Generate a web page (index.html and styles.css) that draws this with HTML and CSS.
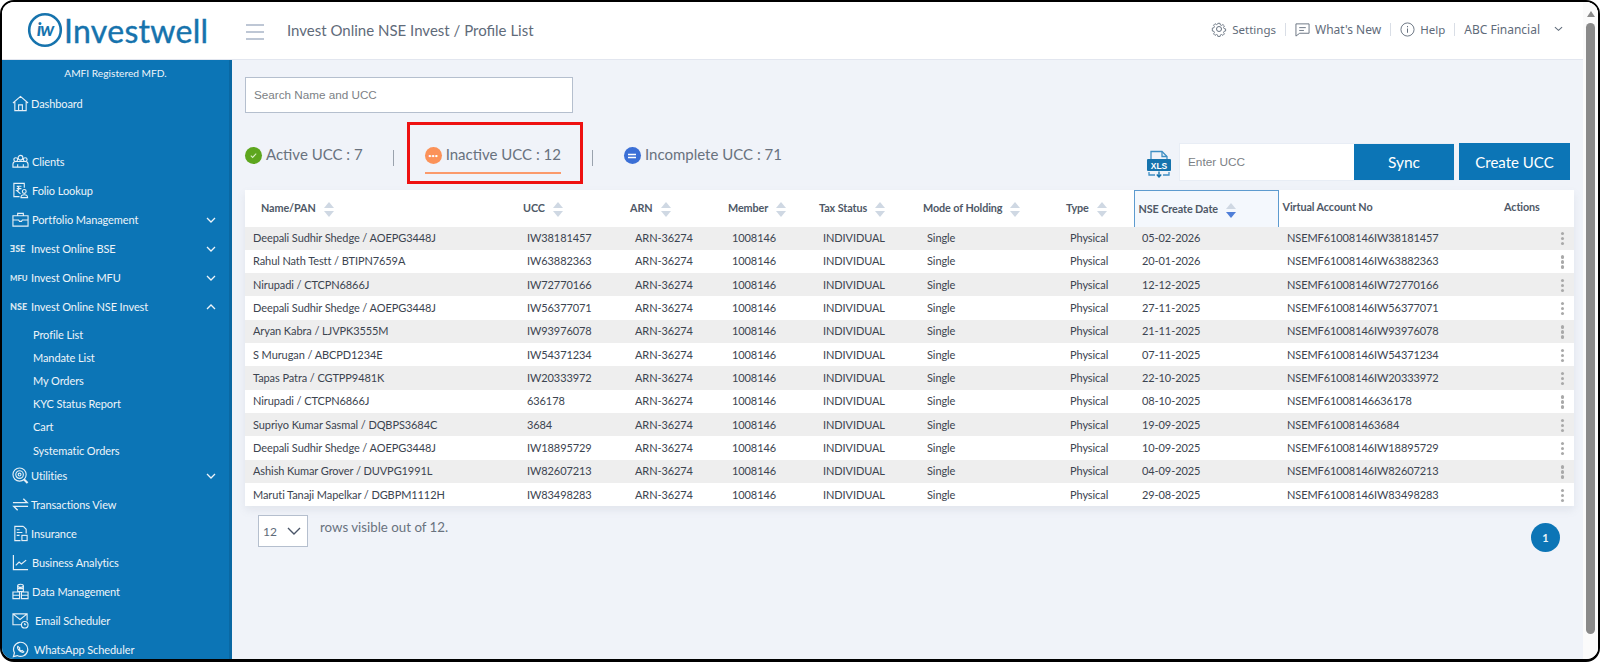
FILE: index.html
```html
<!DOCTYPE html>
<html lang="en">
<head>
<meta charset="utf-8">
<title>Investwell - Profile List</title>
<link rel="stylesheet" href="styles.css">
</head>
<body>
<div class="frame">
  <div class="app">
    <header class="topbar">
      <div class="brand">
        <svg class="brand-mark" viewBox="0 0 36 36" width="36" height="36"><circle cx="18" cy="18" r="15.8" fill="none" stroke="#1673ad" stroke-width="2.6"/><text x="18" y="23.5" text-anchor="middle" class="brand-iw">iw</text></svg>
        <span class="brand-name">Investwell</span>
      </div>
      <svg class="burger" viewBox="0 0 18 16" width="18" height="16"><path d="M0 1h18M0 8h18M0 15h18" stroke="#a9b5c8" stroke-width="1.3" fill="none"/></svg>
      <div class="crumb">Invest Online NSE Invest / Profile List</div>
      <nav class="topnav">
        <svg class="tn-icon" viewBox="0 0 16 16" width="16" height="16"><path d="M6.7 1h2.6l.4 2 1.4.6 1.8-1.1 1.8 1.8-1.1 1.8.6 1.4 2 .4v2.6l-2 .4-.6 1.4 1.1 1.8-1.8 1.8-1.8-1.1-1.4.6-.4 2H6.7l-.4-2-1.4-.6-1.8 1.1-1.8-1.8 1.1-1.8-.6-1.4-2-.4V6.900l2-.4.6-1.400-1.100-1.800 1.800-1.800 1.800 1.100 1.400-.600z" transform="translate(1.500 1.500) scale(.81)" fill="none" stroke="#66717f" stroke-width="1.100"/><circle cx="8" cy="8" r="2.500" fill="none" stroke="#66717f" stroke-width="1"/></svg>
        <span class="tn-link tn-small">Settings</span><i class="tn-sep"></i>
        <svg class="tn-icon" viewBox="0 0 16 16" width="15" height="15"><path d="M1 2h14v10H5l-4 3zM4.500 6h7M4.500 9h5" fill="none" stroke="#66717f" stroke-width="1"/></svg>
        <span class="tn-link">What's New</span><i class="tn-sep"></i>
        <svg class="tn-icon" viewBox="0 0 16 16" width="15" height="15"><circle cx="8" cy="8" r="7" fill="none" stroke="#66717f" stroke-width="1"/><path d="M8 7v4.500M8 4.200v1.300" stroke="#66717f" stroke-width="1.100"/></svg>
        <span class="tn-link tn-small">Help</span><i class="tn-sep"></i>
        <span class="tn-firm">ABC Financial</span>
        <svg class="tn-caret" viewBox="0 0 10 6" width="9" height="6"><path d="M1 1l4 3.500L9 1" fill="none" stroke="#5f6b7a" stroke-width="1.200"/></svg>
      </nav>
    </header>
    <div class="body">
      <aside class="sidebar">
        <div class="amfi">AMFI Registered MFD.</div>
        <ul class="nav">
          <li class="nav-item nav-gap"><svg class="nav-icon" viewBox="0 0 18 18"><path d="M1 8.500 9 1.500l8 7M3 7.500V16.500h12V7.500M7 16.500V10.500h4v6" /></svg><span>Dashboard</span></li>
          <li class="nav-item shift-1"><svg class="nav-icon" viewBox="0 0 18 18"><circle cx="9" cy="5" r="2.500"/><circle cx="4" cy="7" r="2"/><circle cx="14" cy="7" r="2"/><path d="M1 15v-3c0-2 1.500-3 3-3h10c1.500 0 3 1 3 3v3zM6 15v-3M12 15v-3"/></svg><span>Clients</span></li>
          <li class="nav-item shift-1"><svg class="nav-icon" viewBox="0 0 18 18"><path d="M13 6V1.500H2V15.500h6M5 4.500h5M5 7h5M5 4.500c3 0 3 4.500 0 4.500l4 3.500"/><circle cx="13" cy="10" r="2"/><path d="M9.500 16.500c0-4 7-4 7 0z"/></svg><span>Folio Lookup</span></li>
          <li class="nav-item shift-1"><svg class="nav-icon" viewBox="0 0 18 18"><path d="M1 5h16v11H1zM6 5V2.500h6V5M1 9.500h6l1 1.500h2l1-1.500h6"/></svg><span>Portfolio Management</span><svg class="nav-caret" viewBox="0 0 10 6"><path d="M1 1l4 4 4-4"/></svg></li>
          <li class="nav-item"><span class="nav-tag">ƎSE</span><span>Invest Online BSE</span><svg class="nav-caret" viewBox="0 0 10 6"><path d="M1 1l4 4 4-4"/></svg></li>
          <li class="nav-item"><span class="nav-tag nav-tag-sm">MFU</span><span>Invest Online MFU</span><svg class="nav-caret" viewBox="0 0 10 6"><path d="M1 1l4 4 4-4"/></svg></li>
          <li class="nav-item"><span class="nav-tag">NSE</span><span>Invest Online NSE Invest</span><svg class="nav-caret" viewBox="0 0 10 6"><path d="M1 5l4-4 4 4"/></svg></li>
          <li class="nav-sub">
            <a>Profile List</a><a>Mandate List</a><a>My Orders</a><a>KYC Status Report</a><a>Cart</a><a>Systematic Orders</a>
          </li>
          <li class="nav-item"><svg class="nav-icon" viewBox="0 0 18 18"><circle cx="8" cy="8" r="7"/><circle cx="8" cy="8" r="4"/><circle cx="8" cy="8" r="1.500"/><path d="M12.500 13l4 4" stroke-width="2.200"/></svg><span>Utilities</span><svg class="nav-caret" viewBox="0 0 10 6"><path d="M1 1l4 4 4-4"/></svg></li>
          <li class="nav-item"><svg class="nav-icon" viewBox="0 0 18 18"><path d="M1 7h15l-4-4M17 11H2l4 4" stroke-width="1.500"/></svg><span>Transactions View</span></li>
          <li class="nav-item"><svg class="nav-icon" viewBox="0 0 18 18"><path d="M12 1.500H3V16.500h6M12 1.500l3 3V9M5 5h3M5 8h6M5 11h3"/><rect x="10.500" y="11" width="5.500" height="5.500"/></svg><span>Insurance</span></li>
          <li class="nav-item shift-1"><svg class="nav-icon" viewBox="0 0 18 18"><path d="M1.500 1v15.500H17M4 12l3.500-3.500 2.500 2 5-4" stroke-width="1.300"/></svg><span>Business Analytics</span></li>
          <li class="nav-item shift-1"><svg class="nav-icon" viewBox="0 0 18 18"><ellipse cx="9" cy="3" rx="3" ry="1.700"/><path d="M6 3v6h6V3M1 9.500h7v7H1zM10 9.500h7v7h-7zM1 13h7M10 13h7M6 6h6"/></svg><span>Data Management</span></li>
          <li class="nav-item shift-4"><svg class="nav-icon" viewBox="0 0 18 18"><path d="M10 13.500H1V2h15v7M1 2l7.500 6L16 2"/><circle cx="13.500" cy="13.500" r="3.500"/><path d="M13.500 11.700v1.800h1.500"/></svg><span>Email Scheduler</span></li>
          <li class="nav-item shift-3"><svg class="nav-icon" viewBox="0 0 18 18"><path d="M1.500 16.500l1.100-4A7.500 7.500 0 1 1 5.500 15.400z" stroke-width="1.300"/><path d="M6.200 5.500c-1 1 0 3.500 1.800 5s3.800 2 4.500 1l-1.700-1.500-1 .6c-1-.5-1.700-1.300-2.100-2.200l.6-1z"/></svg><span>WhatsApp Scheduler</span></li>
        </ul>
      </aside>
      <main class="main">
        <div class="searchbar"><input class="search" type="text" placeholder="Search Name and UCC"></div>
        <div class="toolbar">
          <div class="tabs">
            <div class="tab tab-active"><span class="dot dot-green"><svg viewBox="0 0 10 10" width="9" height="9"><path d="M2 5.200l2 2 4-4.200" fill="none" stroke="#d7efc4" stroke-width="1.200"/></svg></span>Active UCC : 7</div>
            <i class="tab-sep sep-a"></i>
            <div class="tab tab-inactive"><span class="dot dot-orange"><span class="dots">•••</span></span>Inactive UCC : 12</div>
            <i class="tab-sep sep-b"></i>
            <div class="tab tab-incomplete"><span class="dot dot-blue"><svg viewBox="0 0 10 10" width="10" height="10"><path d="M1 3.500h8M1 6.500h8" stroke="#fff" stroke-width="1.500"/></svg></span>Incomplete UCC : 71</div>
            <div class="highlight"></div>
          </div>
          <div class="actions">
            <svg class="xls" viewBox="0 0 24 28" width="24" height="28"><path d="M4 9V1.500h11l5 5V9M2 22v3h6M22 22v3h-6" fill="none" stroke="#3f8fc4" stroke-width="1.300"/><path d="M15 1.500v5h5" fill="none" stroke="#3f8fc4" stroke-width="1.300"/><rect x="0" y="9" width="24" height="12" rx="1" fill="#1673ad"/><text x="12" y="18.500" text-anchor="middle" class="xls-text">XLS</text><path d="M12 21.500v5M9.800 24.500l2.200 2.500 2.200-2.500" fill="none" stroke="#1673ad" stroke-width="1.400"/></svg>
            <div class="sync-box">
              <input class="ucc" type="text" placeholder="Enter UCC">
              <button class="btn btn-sync" type="button">Sync</button>
            </div>
            <button class="btn btn-create" type="button">Create UCC</button>
          </div>
        </div>
        <div class="table-card">
          <table class="grid">
            <colgroup><col class="c1"><col class="c2"><col class="c3"><col class="c4"><col class="c5"><col class="c6"><col class="c7"><col class="c8"><col class="c9"><col class="c10"></colgroup>
            <thead>
              <tr>
                <th class="th-name">Name/PAN<i class="sort"></i></th>
                <th>UCC<i class="sort"></i></th>
                <th>ARN<i class="sort"></i></th>
                <th>Member<i class="sort"></i></th>
                <th>Tax Status<i class="sort"></i></th>
                <th>Mode of Holding<i class="sort"></i></th>
                <th>Type<i class="sort"></i></th>
                <th class="th-sorted">NSE Create Date<i class="sort sort-desc"></i></th>
                <th class="th-plain">Virtual Account No</th>
                <th class="th-plain th-actions">Actions</th>
              </tr>
            </thead>
            <tbody>
              <tr><td>Deepali Sudhir Shedge / AOEPG3448J</td><td>IW38181457</td><td>ARN-36274</td><td>1008146</td><td>INDIVIDUAL</td><td>Single</td><td>Physical</td><td>05-02-2026</td><td>NSEMF61008146IW38181457</td><td class="kebab"><i></i></td></tr>
              <tr><td>Rahul Nath Testt / BTIPN7659A</td><td>IW63882363</td><td>ARN-36274</td><td>1008146</td><td>INDIVIDUAL</td><td>Single</td><td>Physical</td><td>20-01-2026</td><td>NSEMF61008146IW63882363</td><td class="kebab"><i></i></td></tr>
              <tr><td>Nirupadi / CTCPN6866J</td><td>IW72770166</td><td>ARN-36274</td><td>1008146</td><td>INDIVIDUAL</td><td>Single</td><td>Physical</td><td>12-12-2025</td><td>NSEMF61008146IW72770166</td><td class="kebab"><i></i></td></tr>
              <tr><td>Deepali Sudhir Shedge / AOEPG3448J</td><td>IW56377071</td><td>ARN-36274</td><td>1008146</td><td>INDIVIDUAL</td><td>Single</td><td>Physical</td><td>27-11-2025</td><td>NSEMF61008146IW56377071</td><td class="kebab"><i></i></td></tr>
              <tr><td>Aryan Kabra / LJVPK3555M</td><td>IW93976078</td><td>ARN-36274</td><td>1008146</td><td>INDIVIDUAL</td><td>Single</td><td>Physical</td><td>21-11-2025</td><td>NSEMF61008146IW93976078</td><td class="kebab"><i></i></td></tr>
              <tr><td>S Murugan / ABCPD1234E</td><td>IW54371234</td><td>ARN-36274</td><td>1008146</td><td>INDIVIDUAL</td><td>Single</td><td>Physical</td><td>07-11-2025</td><td>NSEMF61008146IW54371234</td><td class="kebab"><i></i></td></tr>
              <tr><td>Tapas Patra / CGTPP9481K</td><td>IW20333972</td><td>ARN-36274</td><td>1008146</td><td>INDIVIDUAL</td><td>Single</td><td>Physical</td><td>22-10-2025</td><td>NSEMF61008146IW20333972</td><td class="kebab"><i></i></td></tr>
              <tr><td>Nirupadi / CTCPN6866J</td><td>636178</td><td>ARN-36274</td><td>1008146</td><td>INDIVIDUAL</td><td>Single</td><td>Physical</td><td>08-10-2025</td><td>NSEMF61008146636178</td><td class="kebab"><i></i></td></tr>
              <tr><td>Supriyo Kumar Sasmal / DQBPS3684C</td><td>3684</td><td>ARN-36274</td><td>1008146</td><td>INDIVIDUAL</td><td>Single</td><td>Physical</td><td>19-09-2025</td><td>NSEMF610081463684</td><td class="kebab"><i></i></td></tr>
              <tr><td>Deepali Sudhir Shedge / AOEPG3448J</td><td>IW18895729</td><td>ARN-36274</td><td>1008146</td><td>INDIVIDUAL</td><td>Single</td><td>Physical</td><td>10-09-2025</td><td>NSEMF61008146IW18895729</td><td class="kebab"><i></i></td></tr>
              <tr><td>Ashish Kumar Grover / DUVPG1991L</td><td>IW82607213</td><td>ARN-36274</td><td>1008146</td><td>INDIVIDUAL</td><td>Single</td><td>Physical</td><td>04-09-2025</td><td>NSEMF61008146IW82607213</td><td class="kebab"><i></i></td></tr>
              <tr><td>Maruti Tanaji Mapelkar / DGBPM1112H</td><td>IW83498283</td><td>ARN-36274</td><td>1008146</td><td>INDIVIDUAL</td><td>Single</td><td>Physical</td><td>29-08-2025</td><td>NSEMF61008146IW83498283</td><td class="kebab"><i></i></td></tr>
            </tbody>
          </table>
        </div>
        <div class="pager">
          <div class="rows-info">
            <div class="rows-select"><span>12</span><svg viewBox="0 0 14 8" width="14" height="8"><path d="M1 1l6 6 6-6" fill="none" stroke="#4a5568" stroke-width="1.400"/></svg></div>
            <span class="rows-text">rows visible out of 12.</span>
          </div>
          <div class="page-num">1</div>
        </div>
      </main>
      <div class="scrollbar"><i class="sb-up"></i><i class="sb-thumb"></i></div>
    </div>
  </div>
</div>
</body>
</html>
```
FILE: styles.css
```css
* { box-sizing: border-box; }
html, body { margin: 0; padding: 0; height: 100%; background: #fff; overflow: hidden; }
body { font-family: "Lato", "Liberation Sans", sans-serif; color: #3c4450; }

.frame { width: 1600px; height: 662px; border: 2px solid #000; border-bottom-width: 3px; border-radius: 14px; overflow: hidden; background: #fff; }
.app { height: 100%; display: flex; flex-direction: column; }

/* top bar */
.topbar { height: 58px; flex: none; display: flex; align-items: center; background: #fff; border-bottom: 1px solid #e2e6ef; padding-right: 35px; }
.brand { width: 244px; flex: none; display: flex; align-items: center; padding-left: 25px; margin-top: -1px; }
.brand-mark { flex: none; }
.brand-iw { font-family: "Lato", sans-serif; font-size: 19px; font-style: italic; font-weight: 700; fill: #1673ad; letter-spacing: -1px; }
.brand-name { font-size: 32px; font-weight: 400; color: #1673ad; margin-left: 1px; letter-spacing: .3px; -webkit-text-stroke: .4px #1673ad; }
.burger { flex: none; margin-top: 2px; }
.crumb { margin-left: 23px; margin-top: -2px; font-size: 15px; color: #5f6b7a; white-space: nowrap; }
.topnav { margin-left: auto; margin-top: -3px; display: flex; align-items: center; font-family: "Noto Sans", sans-serif; font-size: 12px; color: #5f6b7a; }
.tn-icon { flex: none; }
.tn-link { margin-left: 5px; white-space: nowrap; }
.tn-small { font-size: 11.500px; }
.tn-firm { white-space: nowrap; }
.tn-sep { width: 1px; height: 13px; background: #d9deE6; margin: 0 9px; }
.tn-caret { margin-left: 14px; }

/* shell */
.body { flex: 1; min-height: 0; display: flex; }

/* sidebar */
.sidebar { width: 230px; flex: none; background: #0c75b6; color: #eef4f9; overflow: hidden; border-right: 3px solid #0a68a3; }
.amfi { height: 28px; padding-top: 7px; text-align: center; font-size: 10.200px; color: #eef4f9; white-space: nowrap; }
.nav { list-style: none; margin: 0; padding: 1px 0 0; }
.nav-item { height: 29px; display: flex; align-items: center; padding-left: 10px; font-size: 11px; letter-spacing: -.09px; white-space: nowrap; }
.nav-gap { margin-bottom: 29px; }
.nav-icon { width: 17px; height: 17px; flex: none; margin-right: 2px; fill: none; stroke: #e6eff6; stroke-width: 1.200; }
.nav-tag { width: 21px; flex: none; font-size: 9px; font-weight: 900; color: #d8e6f0; margin-left: -2px; white-space: nowrap; letter-spacing: 0; }
.nav-tag-sm { font-size: 7.800px; }
.shift-1 .nav-icon { margin-right: 3px; }
.shift-3 .nav-icon { margin-right: 5px; }
.shift-4 .nav-icon { margin-right: 6px; }
.nav-caret { width: 10px; height: 6px; margin-left: auto; margin-right: 13px; fill: none; stroke: #eef4f9; stroke-width: 1.300; flex: none; }
.nav-sub { height: 140px; padding: 1.500px 0 0 31px; font-size: 11px; letter-spacing: -.09px; }
.nav-sub a { display: flex; align-items: center; height: 23.200px; color: #eef4f9; }

/* main */
.main { flex: 1; min-width: 0; background: #f0f3f9; padding: 17px 10px 0 13px; overflow: hidden; }
.searchbar { height: 36px; }
.search { width: 328px; height: 36px; border: 1px solid #b5bfce; background: #fff; padding: 0 8px 2px; font-family: "Liberation Sans", sans-serif; font-size: 11.700px; outline: none; }
.search::placeholder, .ucc::placeholder { color: #7c7f85; opacity: 1; }

.toolbar { height: 77px; display: flex; justify-content: space-between; }
.tabs { position: relative; display: flex; align-items: flex-start; padding-top: 31px; font-size: 15px; color: #69727e; }
.tab { display: flex; align-items: center; height: 20px; white-space: nowrap; }
.dot { width: 17px; height: 17px; border-radius: 50%; flex: none; margin-right: 4px; margin-top: 3px; display: flex; align-items: center; justify-content: center; }
.dot-green { background: #5da61e; }
.dot-orange { background: #fb9259; }
.dot-blue { background: #3b6fd6; }
.dots { font-size: 6px; color: #fff; letter-spacing: -.2px; line-height: 1; }
.tab-sep { width: 1px; height: 16px; background: #9aa2ad; flex: none; }
.sep-a { margin: 6px 31px 0 30px; }
.sep-b { margin: 6px 31px 0 31px; }
.tab-inactive { position: relative; }
.tab-inactive::after { content: ""; position: absolute; left: 0; right: 0; top: 28px; height: 2px; background: #fb9a6b; }
.highlight { position: absolute; left: 162px; top: 9px; width: 176px; height: 62px; border: 3px solid #ee1111; pointer-events: none; }

.actions { display: flex; align-items: flex-start; padding: 30px 3px 0 0; }
.xls { flex: none; margin: 7px 8px 0 0; }
.sync-box { display: flex; width: 275px; height: 38px; background: #fff; border: 1px solid #e8edf5; border-right: 0; }
.ucc { flex: 1; min-width: 0; border: 0; background: transparent; padding: 0 8px; font-family: "Liberation Sans", sans-serif; font-size: 11.800px; outline: none; }
.btn { border: 0; color: #fff; background: #0c75b6; font-family: "Lato", sans-serif; font-size: 15px; cursor: pointer; padding: 0; }
.btn-sync { width: 100px; height: 36px; font-size: 15.500px; }
.btn-create { width: 111px; height: 37px; margin-left: 5px; }

/* table */
.table-card { width: 1329px; background: #fff; box-shadow: 0 4px 8px rgba(120,130,150,.12); }
.grid { width: 1329px; table-layout: fixed; border-collapse: collapse; font-size: 11px; letter-spacing: -.09px; }
.c1 { width: 274px; } .c2 { width: 107px; } .c3 { width: 98px; } .c4 { width: 91px; } .c5 { width: 104px; }
.c6 { width: 143px; } .c7 { width: 72px; } .c8 { width: 144px; } .c9 { width: 221px; } .c10 { width: 75px; }
.grid thead tr { height: 36px; }
.grid th { font-weight: 700; font-size: 10.800px; color: #4f5967; text-align: left; padding: 1px 0 0 4px; white-space: nowrap; }
.grid .th-name { padding-left: 16px; }
.grid .th-plain { padding-top: 0; padding-bottom: 4px; }
.grid .th-actions { padding-left: 5px; }
.grid .th-sorted { background: #f4f8fd; border: 1px solid #5d9bcf; border-bottom: 0; padding-left: 4px; padding-top: 2px; }
.grid tbody tr { height: 23.330px; }
.grid tbody tr:nth-child(odd) { background: #eeeeee; }
.grid td { padding: 0 0 1px 8px; color: #3c4450; white-space: nowrap; overflow: hidden; }
.grid td:nth-child(3), .grid td:nth-child(9) { padding-left: 9px; }
.sort { display: inline-block; vertical-align: middle; width: 11px; height: 15px; margin-left: 8px; position: relative; }
.sort::before, .sort::after { content: ""; position: absolute; left: 0; border-left: 5.500px solid transparent; border-right: 5.500px solid transparent; }
.sort::before { top: 0; border-bottom: 6.500px solid #cfd8e3; }
.sort::after { bottom: 0; border-top: 6.500px solid #cfd8e3; }
.sort-desc::after { border-top-color: #4f7fd8; }
.grid td.kebab { padding: 1px 10px 0 0; }
.kebab i { display: block; width: 3.500px; height: 3.500px; margin-left: auto; border-radius: 50%; background: #a9a9a9; box-shadow: 0 5px 0 #a9a9a9, 0 -5px 0 #a9a9a9; }

/* pager */
.pager { width: 1329px; display: flex; justify-content: space-between; align-items: flex-start; padding: 9px 14px 0 13px; }
.rows-info { display: flex; align-items: flex-start; }
.rows-select { width: 50px; height: 32px; border: 1px solid #b5bfce; background: #fff; display: flex; align-items: center; justify-content: space-between; padding: 0 6px 0 4px; font-size: 12px; color: #5f6b7a; }
.rows-text { margin-left: 12px; font-size: 13.300px; color: #69727e; margin-top: 4px; }
.page-num { width: 29px; height: 29px; border-radius: 50%; background: #0c75b6; color: #e8f2f9; font-size: 11px; font-weight: 700; display: flex; align-items: center; justify-content: center; margin-top: 8px; }

/* icons text */
.xls-text { font-family: "Liberation Sans", sans-serif; font-size: 8.500px; font-weight: 700; fill: #fff; }

/* page scrollbar */
.scrollbar { width: 15px; flex: none; background: #fbfbfb; margin-top: -58px; display: flex; flex-direction: column; align-items: center; }
.sb-up { margin-top: 9px; border-left: 4px solid transparent; border-right: 4px solid transparent; border-bottom: 6px solid #8a8a8a; }
.sb-thumb { width: 9px; height: 611px; margin-top: 6px; background: #8a8a8a; border-radius: 5px; }
```
